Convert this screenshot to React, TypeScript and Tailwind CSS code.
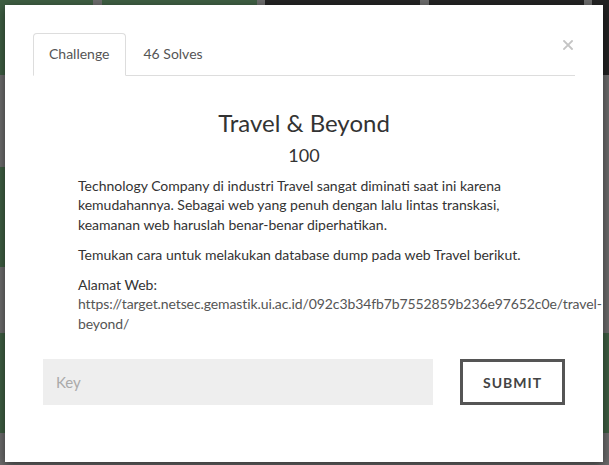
import React from "react";

const G = "bg-[#3e5e42]";
const D = "bg-[#232323]";
const N = "bg-transparent";

const rows: { top: string; cells: string[] }[] = [
  { top: "mt-[-25px]", cells: [G, G, D, D, D] },
  { top: "mt-[92px]", cells: [G, G, G, G, N] },
  { top: "mt-[66px]", cells: [G, G, G, G, G] },
];

export default function App() {
  return (
    <div
      className="relative w-[609px] h-[465px] overflow-hidden bg-[#6b6b6b]"
      style={{ fontFamily: "Lato, 'Noto Sans', sans-serif" }}
    >
      {/* dimmed page behind the modal */}
      <div className="flex flex-col ml-[-62px]">
        {rows.map((r, i) => (
          <div key={i} className={`grid grid-cols-[repeat(5,155px)] gap-x-[8.5px] ${r.top}`}>
            {r.cells.map((c, j) => (
              <div key={j} className={`h-[100px] ${c}`} />
            ))}
          </div>
        ))}
      </div>

      {/* modal */}
      <div className="absolute left-[5px] top-[5px] w-[598px] h-[457px] bg-white shadow-[0_3px_9px_rgba(0,0,0,0.5)] px-[28px] pt-[28px]">
        <button className="absolute left-[558px] top-[35px] w-[10px] h-[10px] flex items-center justify-center">
          <svg width="10" height="10" viewBox="0 0 10 10">
            <path d="M1 1 L9 9 M9 1 L1 9" stroke="#c4c4c4" strokeWidth="1.8" strokeLinecap="square" />
          </svg>
        </button>

        <div className="flex border-b border-[#dddddd]">
          <div className="-mb-px px-[15px] py-[10px] leading-5 text-[14px] text-[#555] bg-white border border-[#dddddd] border-b-transparent rounded-t-[4px]">
            Challenge
          </div>
          <div className="ml-[2px] px-[15px] py-[10px] leading-5 text-[14px] text-[#555] border border-transparent">
            46 Solves
          </div>
        </div>

        <h3 className="mt-[34px] text-center text-[24px] leading-[26px] text-[#333]">Travel &amp; Beyond</h3>
        <div className="mt-[9px] text-center text-[18px] leading-[20px] text-[#333]">100</div>

        <div className="mt-[11px] px-[45px] text-[14px] leading-[19.3px] text-[#333]">
          <p className="mb-[11px]">
            Technology Company di industri Travel sangat diminati saat ini karena kemudahannya. Sebagai web yang penuh
            dengan lalu lintas transkasi, keamanan web haruslah benar-benar diperhatikan.
          </p>
          <p className="mb-[11px]">Temukan cara untuk melakukan database dump pada web Travel berikut.</p>
          <p className="mb-[11px]">
            Alamat Web:
            <br />
            <span className="text-[#555] tracking-[-0.1px]">
              https://target.netsec.gemastik.ui.ac.id/092c3b34fb7b7552859b236e97652c0e/travel-beyond/
            </span>
          </p>
        </div>

        <div className="mt-[26px] flex px-[10px] gap-[27px]">
          <div className="w-[390px] h-[46px] bg-[#eeeeee] flex items-center px-[13px]">
            <span className="text-[15px] text-[#aaa]">Key</span>
          </div>
          <button className="w-[105px] h-[46px] border-[3px] border-[#555] flex items-center justify-center text-[14px] font-bold tracking-[1px] text-[#444]">
            SUBMIT
          </button>
        </div>
      </div>
    </div>
  );
}
